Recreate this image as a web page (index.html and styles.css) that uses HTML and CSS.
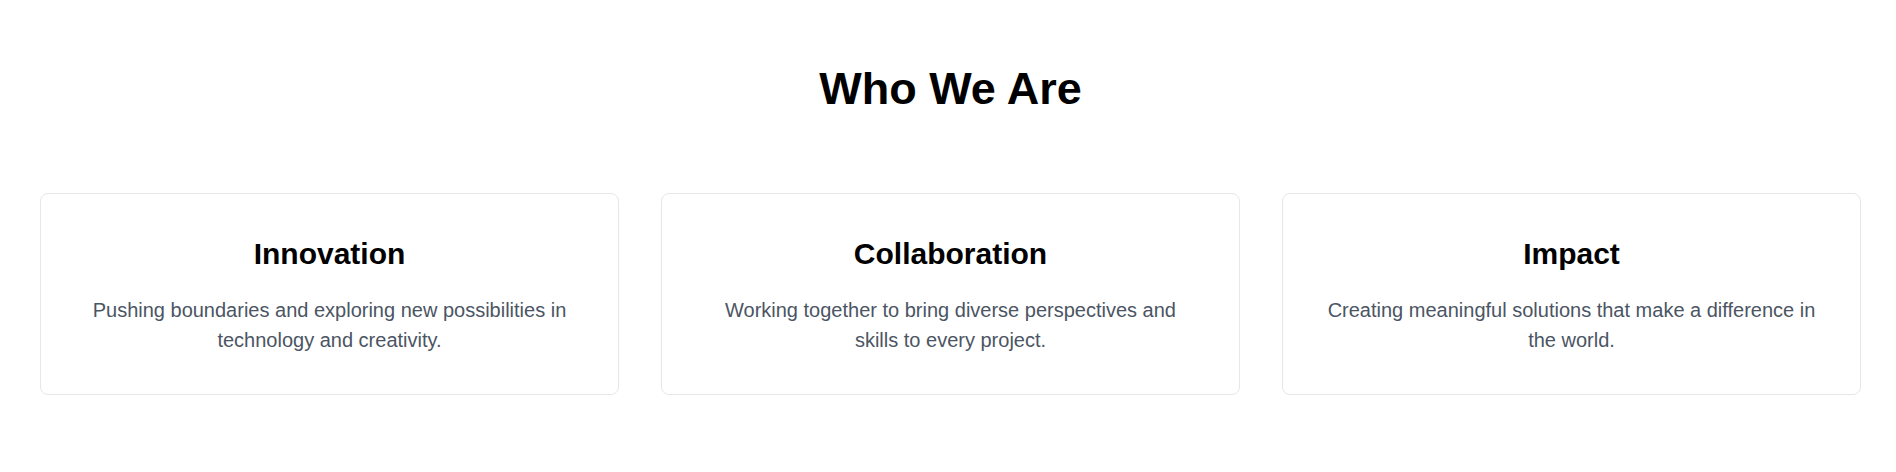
FILE: index.html
```html
<!DOCTYPE html>
<html lang="en">
<head>
<meta charset="utf-8">
<title>Who We Are</title>
<link rel="stylesheet" href="styles.css">
</head>
<body>
<section class="about">
  <h2 class="about-title">Who We Are</h2>
  <div class="cards">
    <div class="card">
      <h3 class="card-title">Innovation</h3>
      <p class="card-text">Pushing boundaries and exploring new possibilities in technology and creativity.</p>
    </div>
    <div class="card">
      <h3 class="card-title">Collaboration</h3>
      <p class="card-text">Working together to bring diverse perspectives and skills to every project.</p>
    </div>
    <div class="card">
      <h3 class="card-title">Impact</h3>
      <p class="card-text">Creating meaningful solutions that make a difference in the world.</p>
    </div>
  </div>
</section>
</body>
</html>
```
FILE: styles.css
```css
* {
  box-sizing: border-box;
}

body {
  margin: 0;
  background: #ffffff;
  font-family: "Liberation Sans", Arial, Helvetica, sans-serif;
  color: #000000;
}

.about {
  padding: 62px 35px 78px 40px;
}

.about-title {
  margin: 0 0 78px;
  text-align: center;
  font-size: 45px;
  line-height: 53px;
  font-weight: 700;
  color: #000000;
}

.cards {
  display: grid;
  grid-template-columns: repeat(3, 1fr);
  gap: 42px;
}

.card {
  border: 1px solid #e5e7eb;
  border-radius: 8px;
  padding: 42px 40px 39px;
  text-align: center;
  background: #ffffff;
}

.card-title {
  margin: 0 0 23px;
  font-size: 30px;
  line-height: 36px;
  font-weight: 700;
  color: #000000;
}

.card-text {
  margin: 0;
  font-size: 20px;
  line-height: 30px;
  color: #4b5563;
}
```
